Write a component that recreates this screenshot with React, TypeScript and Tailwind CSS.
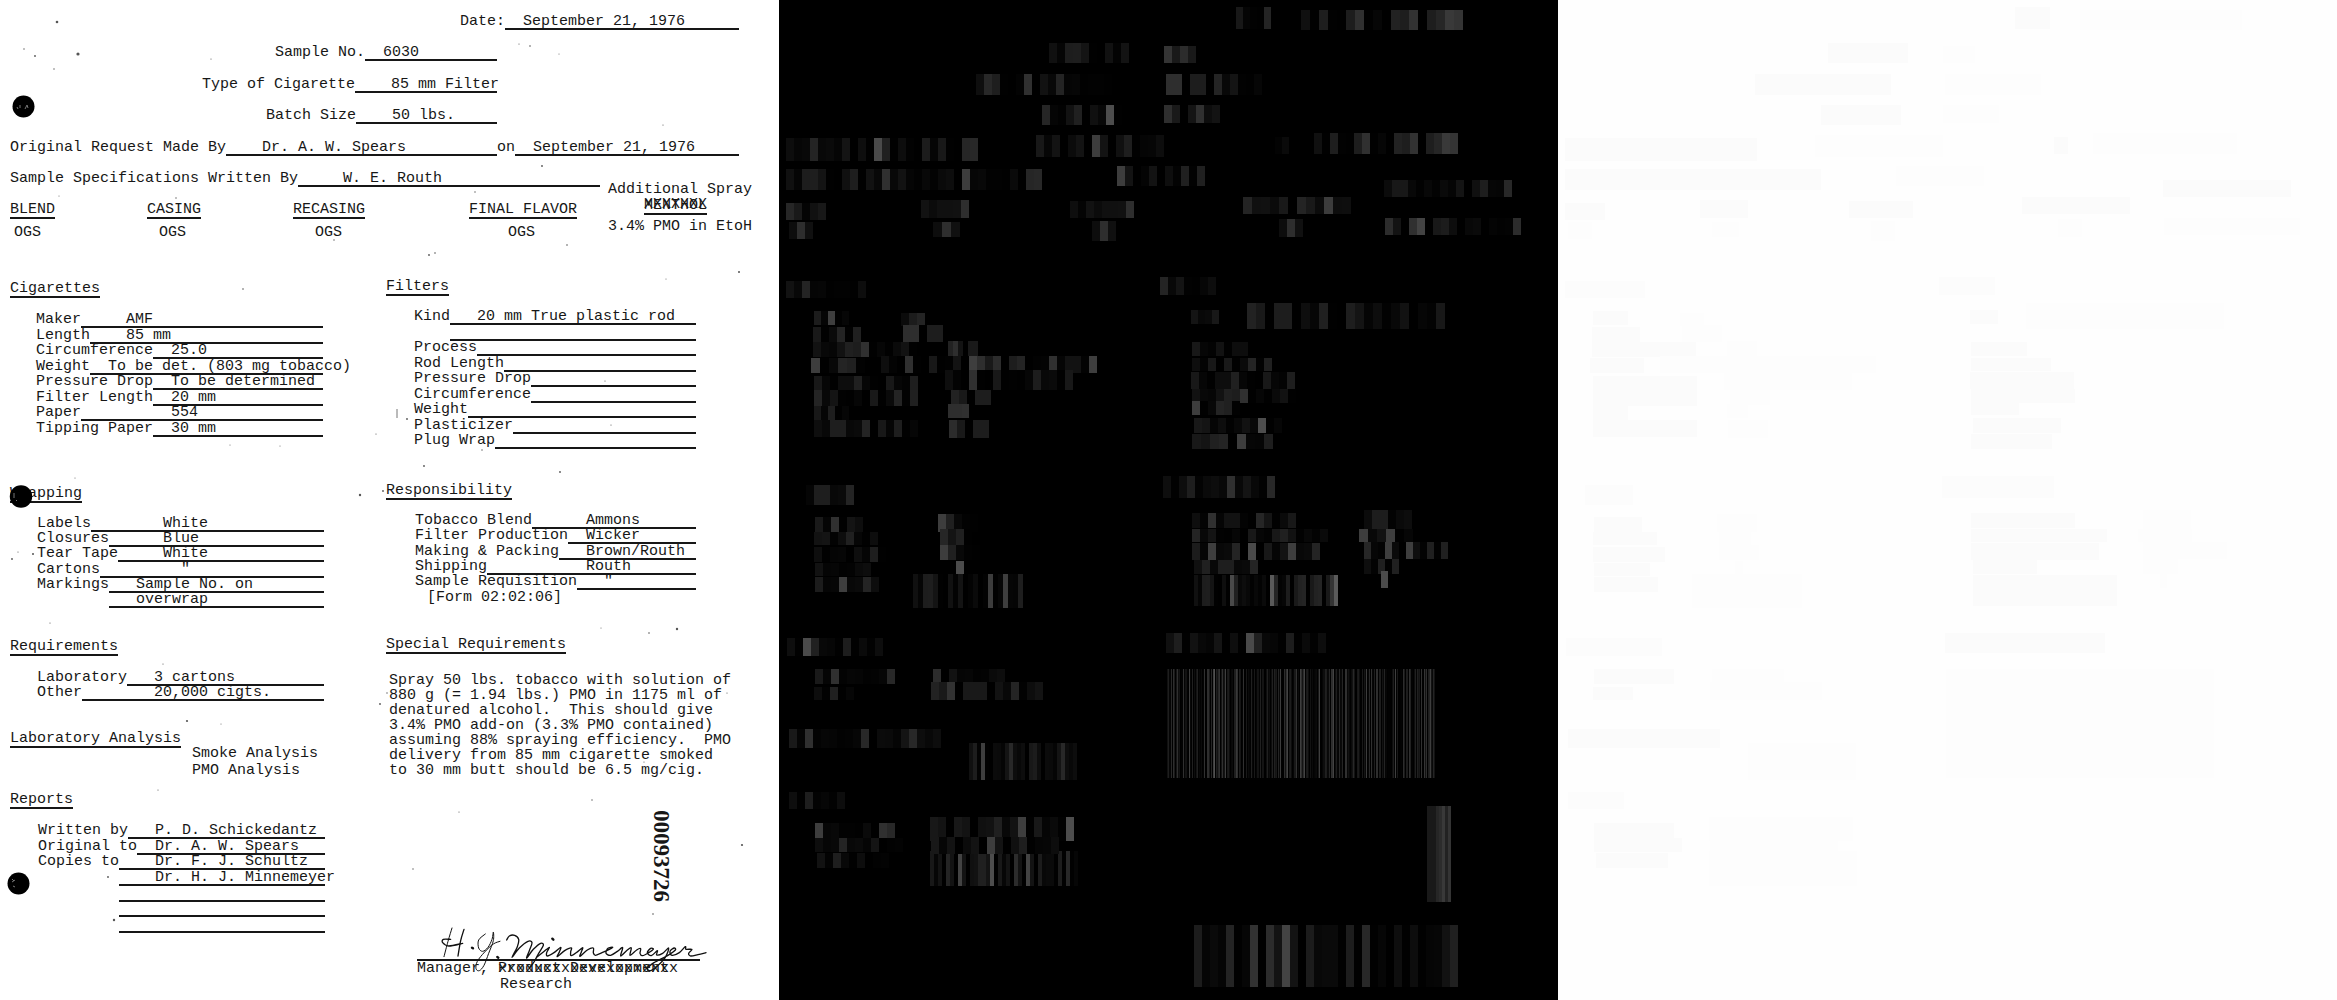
import React from "react";

type FieldData = { label: string; value?: string };

const cigarettes: FieldData[] = [
  { label: "Maker", value: "     AMF" },
  { label: "Length", value: "    85 mm" },
  { label: "Circumference", value: "  25.0" },
  { label: "Weight", value: "  To be det. (803 mg tobacco)" },
  { label: "Pressure Drop", value: "  To be determined" },
  { label: "Filter Length", value: "  20 mm" },
  { label: "Paper", value: "          554" },
  { label: "Tipping Paper", value: "  30 mm" },
];

const wrapping: FieldData[] = [
  { label: "Labels", value: "        White" },
  { label: "Closures", value: "      Blue" },
  { label: "Tear Tape", value: "     White" },
  { label: "Cartons", value: '         "' },
  { label: "Markings", value: "   Sample No. on" },
  { label: "        ", value: "   overwrap" },
];

const requirements: FieldData[] = [
  { label: "Laboratory", value: "   3 cartons" },
  { label: "Other", value: "        20,000 cigts." },
];

const reports: FieldData[] = [
  { label: "Written by", value: "   P. D. Schickedantz" },
  { label: "Original to", value: "  Dr. A. W. Spears" },
  { label: "Copies to", value: "    Dr. F. J. Schultz" },
  { label: "         ", value: "    Dr. H. J. Minnemeyer" },
  { label: "         " },
  { label: "         " },
  { label: "         " },
];

const filters: FieldData[] = [
  { label: "Kind", value: "   20 mm True plastic rod" },
  { label: "    " },
  { label: "Process" },
  { label: "Rod Length" },
  { label: "Pressure Drop" },
  { label: "Circumference" },
  { label: "Weight" },
  { label: "Plasticizer" },
  { label: "Plug Wrap" },
];

const responsibility: FieldData[] = [
  { label: "Tobacco Blend", value: "      Ammons" },
  { label: "Filter Production", value: "  Wicker" },
  { label: "Making & Packing", value: "   Brown/Routh" },
  { label: "Shipping", value: "           Routh" },
  { label: "Sample Requisition", value: '   "' },
];

const specialText = [
  "Spray 50 lbs. tobacco with solution of",
  "880 g (= 1.94 lbs.) PMO in 1175 ml of",
  "denatured alcohol.  This should give",
  "3.4% PMO add-on (3.3% PMO contained)",
  "assuming 88% spraying efficiency.  PMO",
  "delivery from 85 mm cigarette smoked",
  "to 30 mm butt should be 6.5 mg/cig.",
];

function Rule({ children }: { children?: React.ReactNode }) {
  return <span className="h-4 min-w-0 flex-1 border-b-2 border-neutral-900">{children}</span>;
}

function Field({ label, value }: FieldData) {
  return (
    <div className="flex h-[15px] items-end">
      <span className="h-4">{label}</span>
      <Rule>{value}</Rule>
    </div>
  );
}

function Heading({ children }: { children: React.ReactNode }) {
  return (
    <h2 className="flex">
      <span className="h-[17px] border-b-2 border-neutral-900">{children}</span>
    </h2>
  );
}

function Fields({ items, className }: { items: FieldData[]; className: string }) {
  return (
    <div className={`flex flex-col justify-between ${className}`}>
      {items.map((f, i) => (
        <Field key={i} label={f.label} value={f.value} />
      ))}
    </div>
  );
}

function Overtyped({ text, over }: { text: string; over: string }) {
  return (
    <span className="relative">
      <s className="no-underline">{text}</s>
      <span aria-hidden="true" className="absolute left-0 top-0">
        {over}
      </span>
    </span>
  );
}

const specks: [number, number, number][] = [
  [57, 22, 1.3], [24, 49, 0.7], [35, 56, 0.9], [78, 54, 1.6], [54, 69, 0.7], [211, 59, 0.6],
  [519, 44, 0.6], [530, 46, 0.8], [559, 54, 0.5], [663, 125, 0.6], [542, 166, 0.9], [475, 192, 0.7],
  [176, 198, 0.7], [59, 196, 0.5], [334, 240, 0.7], [567, 245, 0.8], [429, 255, 0.9], [435, 253, 0.8],
  [243, 289, 0.8], [739, 272, 1], [666, 279, 0.5], [407, 419, 0.9], [376, 434, 0.6], [230, 445, 0.5],
  [280, 446, 0.5], [424, 466, 0.9], [560, 472, 0.9], [482, 450, 0.7], [605, 381, 0.6], [611, 425, 0.6],
  [360, 495, 1.2], [383, 491, 0.9], [75, 478, 0.5], [12, 559, 0.9], [18, 552, 0.6], [33, 554, 1],
  [50, 623, 0.6], [649, 633, 0.8], [677, 629, 1.2], [601, 628, 0.5], [163, 664, 0.6], [187, 721, 1.1],
  [221, 724, 0.5], [380, 704, 0.9], [387, 693, 0.7], [727, 693, 0.6], [644, 762, 0.6], [158, 790, 0.6],
  [592, 800, 0.7], [459, 812, 0.6], [413, 869, 0.7], [742, 845, 1.1], [108, 877, 0.9], [114, 920, 1.2],
  [653, 914, 0.8],
];

function ScanMarks() {
  return (
    <svg className="pointer-events-none absolute left-0 top-0" width="779" height="1000" viewBox="0 0 779 1000" aria-hidden="true">
      {specks.map(([x, y, r], i) => (
        <circle key={i} cx={x} cy={y} r={r} fill="#555" />
      ))}
      <path d="M397 409v9" stroke="#777" strokeWidth="1" />
      <circle cx="23.500" cy="106.500" r="11" fill="#000" />
      <circle cx="21" cy="496.500" r="11.200" fill="#000" />
      <circle cx="18.500" cy="883.500" r="11" fill="#000" />
      <path d="M17 107l1 2M20 105v3M25 109l2-4 1 3M14 493v5M16 500l1 1M12 882l3-2M13 886l2 1M12 879l2 2" stroke="#777" strokeWidth="1" fill="none" />
    </svg>
  );
}

type Point = [number, number];

/* Smooth pen stroke that passes through every point. */
function stroke(points: Point[]) {
  let d = `M${points[0][0]} ${points[0][1]}`;
  for (let i = 0; i < points.length - 1; i++) {
    const a = points[Math.max(i - 1, 0)];
    const b = points[i];
    const c = points[i + 1];
    const e = points[Math.min(i + 2, points.length - 1)];
    d += `C${b[0] + (c[0] - a[0]) / 6} ${b[1] + (c[1] - a[1]) / 6} ${c[0] - (e[0] - b[0]) / 6} ${c[1] - (e[1] - b[1]) / 6} ${c[0]} ${c[1]}`;
  }
  return d;
}

const thinStrokes: Point[][] = [
  [[126, 36], [114, 76], [102, 122]],
  [[226, 54], [206, 72], [206, 96], [218, 106], [234, 94], [246, 70], [250, 48], [250, 74], [236, 112], [222, 148], [208, 164], [198, 158], [202, 136], [224, 108], [250, 84], [270, 76]],
];

const penStrokes: Point[][] = [
  [[162, 40], [152, 74], [144, 120]],
  [[122, 70], [100, 70], [98, 80], [116, 90], [158, 82]],
  [[290, 72], [298, 60], [314, 58], [326, 70], [322, 92], [306, 124], [328, 96], [354, 76], [366, 80], [358, 104], [350, 126], [370, 100], [392, 82], [400, 88], [386, 112], [372, 138], [358, 156]],
  [[382, 122], [400, 108], [418, 94], [410, 110], [412, 120], [432, 110], [452, 94], [448, 108], [442, 122], [464, 104], [484, 96], [482, 108], [484, 119], [504, 106], [518, 95], [514, 108], [510, 121], [532, 102], [550, 96], [550, 110], [556, 118], [576, 110], [598, 100], [608, 94], [594, 97], [588, 112], [602, 118], [622, 106], [638, 95], [632, 120], [652, 102], [664, 96], [660, 118], [680, 102], [692, 98], [690, 112], [698, 119], [716, 110], [730, 100], [722, 97], [712, 110], [724, 119], [742, 104], [740, 117], [758, 112], [776, 96], [766, 124], [742, 150], [722, 164], [712, 158], [732, 140], [774, 118], [796, 102], [792, 96], [780, 106], [786, 118], [808, 110], [826, 92], [828, 100], [846, 100], [836, 112], [842, 120], [864, 116], [888, 110]],
];

function Signature() {
  return (
    <svg className="pointer-events-none absolute -left-[7px] top-[14px]" width="310" height="85" viewBox="0 0 930 255" role="img" aria-label="Signature">
      <g fill="none" stroke="#111" strokeLinecap="round" strokeLinejoin="round">
        {thinStrokes.map((p, i) => (
          <path key={i} d={stroke(p)} strokeWidth="3" />
        ))}
        {penStrokes.map((p, i) => (
          <path key={i} d={stroke(p)} strokeWidth="4" />
        ))}
        <path d="M186 95l3 2M262 123l3 2M427 68l3 3" strokeWidth="7" />
      </g>
    </svg>
  );
}

function DocumentPanel() {
  return (
    <article className="relative min-w-0 overflow-hidden whitespace-pre bg-white pt-[14px] font-['Liberation_Mono',monospace] text-[15px] leading-4 text-neutral-900">
      <header className="flex h-[173px] w-[739px] flex-col justify-between">
        <div className="flex pl-[460px]">
          <span>Date:</span>
          <Rule>{"  September 21, 1976"}</Rule>
        </div>
        <div className="flex w-[497px] pl-[275px]">
          <span>Sample No.</span>
          <Rule>{"  6030"}</Rule>
        </div>
        <div className="flex w-[497px] pl-[202px]">
          <span>Type of Cigarette</span>
          <Rule>{"    85 mm Filter"}</Rule>
        </div>
        <div className="flex w-[497px] pl-[266px]">
          <span>Batch Size</span>
          <Rule>{"    50 lbs."}</Rule>
        </div>
        <div className="flex pl-[10px]">
          <div className="flex w-[487px]">
            <span>Original Request Made By</span>
            <Rule>{"    Dr. A. W. Spears"}</Rule>
          </div>
          <span>on</span>
          <Rule>{"  September 21, 1976"}</Rule>
        </div>
        <div className="flex w-[600px] pl-[10px]">
          <span>Sample Specifications Written By</span>
          <Rule>{"     W. E. Routh"}</Rule>
        </div>
      </header>

      <table className="-mt-[5px] ml-[10px] w-[757px] table-fixed text-left">
        <thead>
          <tr className="h-[37px] align-bottom">
            <th className="w-[137px] p-0 font-normal"><Heading>BLEND</Heading></th>
            <th className="w-[146px] p-0 font-normal"><Heading>CASING</Heading></th>
            <th className="w-[176px] p-0 font-normal"><Heading>RECASING</Heading></th>
            <th className="w-[139px] p-0 font-normal"><Heading>FINAL FLAVOR</Heading></th>
            <th className="p-0 pb-1 font-normal">
              <div className="h-4">Additional Spray</div>
              <div className="flex pl-9"><Heading><Overtyped text="MENTHOL" over="XXXXXXX" /></Heading></div>
            </th>
          </tr>
        </thead>
        <tbody>
          <tr className="h-[22px] align-bottom">
            <td className="p-0 pl-1">OGS</td>
            <td className="p-0 pl-3">OGS</td>
            <td className="p-0 pl-[22px]">OGS</td>
            <td className="p-0 pl-[39px]">OGS</td>
            <td className="p-0 align-top">3.4% PMO in EtoH</td>
          </tr>
        </tbody>
      </table>

      <div className="flex">
        <div className="w-[376px] pl-[10px] pt-10">
          <Heading>Cigarettes</Heading>
          <Fields items={cigarettes} className="ml-[26px] mt-[15px] h-[124px] w-[287px]" />
          <div className="mt-[49px]"><Heading>Wrapping</Heading></div>
          <Fields items={wrapping} className="ml-[27px] mt-[14px] h-[91px] w-[287px]" />
          <div className="mt-[31px]"><Heading>Requirements</Heading></div>
          <Fields items={requirements} className="ml-[27px] mt-[15px] h-[30px] w-[287px]" />
          <div className="mt-[30px]"><Heading>Laboratory Analysis</Heading></div>
          <div className="-mt-[3px] pl-[182px] leading-[17px]">
            <p>Smoke Analysis</p>
            <p>PMO Analysis</p>
          </div>
          <div className="mt-[13px]"><Heading>Reports</Heading></div>
          <Fields items={reports} className="ml-[28px] mt-[15px] h-[109px] w-[287px]" />
        </div>

        <div className="w-[380px] pl-[10px] pt-[38px]">
          <Heading>Filters</Heading>
          <Fields items={filters} className="ml-[28px] mt-[14px] h-[139px] w-[282px]" />
          <div className="mt-[34px]"><Heading>Responsibility</Heading></div>
          <Fields items={responsibility} className="ml-[29px] mt-[14px] h-[76px] w-[281px]" />
          <p className="ml-[41px]">[Form 02:02:06]</p>
          <div className="mt-[31px]"><Heading>Special Requirements</Heading></div>
          <p className="ml-[3px] mt-[19px] leading-[15px]">{specialText.join("\n")}</p>
          <div className="ml-[264px] mt-8 h-[92px] w-[23px] font-['Liberation_Serif',serif] text-[23px] font-bold leading-[23px] [writing-mode:vertical-rl]">
            00093726
          </div>
          <div className="relative ml-[31px] w-[283px]">
            <div className="h-[59px] border-b-2 border-neutral-900" />
            <Signature />
            <p className="flex">Manager, <Overtyped text="Product Development " over="xxxxxxxxxxxxxxxxxxxx" /></p>
            <p className="pl-[83px]">Research</p>
          </div>
        </div>
      </div>
      <ScanMarks />
    </article>
  );
}

/* Text regions: x, y, character advance, height, kind, text. */
type Kind = "label" | "heading" | "value";
type Region = [number, number, number, number, Kind, string];

const regions: Region[] = [
  [457, 7, 7, 22, "label", "Date:"],
  [522, 10, 9, 20, "value", "September 21, 1976"],
  [270, 43, 8, 20, "label", "Sample No."],
  [385, 46, 8, 17, "value", "6030"],
  [197, 74, 8, 21, "label", "Type of Cigarette"],
  [387, 74, 8, 21, "value", "85 mm Filter"],
  [263, 105, 8, 20, "label", "Batch Size"],
  [385, 105, 8, 18, "value", "50 lbs."],
  [7, 138, 8, 23, "label", "Original Request Made By"],
  [257, 135, 8, 22, "value", "Dr. A. W. Spears"],
  [496, 137, 7, 17, "label", "on"],
  [535, 133, 8, 21, "value", "September 21, 1976"],
  [7, 169, 8, 21, "label", "Sample Specifications Written By"],
  [338, 166, 8, 20, "value", "W. E. Routh"],
  [605, 180, 8, 17, "label", "Additional Spray"],
  [7, 203, 8, 17, "label", "BLEND"],
  [142, 200, 8, 18, "label", "CASING"],
  [291, 201, 8, 17, "label", "RECASING"],
  [464, 197, 9, 17, "label", "FINAL FLAVOR"],
  [10, 222, 8, 17, "value", "OGS"],
  [154, 222, 9, 15, "value", "OGS"],
  [313, 221, 8, 20, "value", "OGS"],
  [500, 219, 8, 18, "value", "OGS"],
  [606, 218, 8, 17, "value", "3. 4% PMO in EtoH"],
  [7, 281, 8, 17, "heading", "Cigarettes"],
  [381, 277, 8, 18, "heading", "Filters"],
  [122, 313, 8, 13, "value", "AMF"],
  [35, 311, 7, 14, "label", "Maker"],
  [124, 325, 8, 17, "value", "85 mm"],
  [34, 327, 8, 15, "label", "Length"],
  [169, 341, 5, 16, "value", "25. 00"],
  [34, 342, 8, 15, "label", "Circumference"],
  [32, 358, 9, 15, "label", "Weight"],
  [102, 356, 8, 17, "value", "To be det. (803 mg tobacco)"],
  [166, 370, 8, 20, "value", "To be determined"],
  [35, 376, 8, 14, "label", "Pressure Drop"],
  [35, 390, 8, 16, "label", "Filter Length"],
  [172, 390, 8, 15, "value", "20 mm"],
  [35, 406, 7, 14, "label", "Paper"],
  [169, 404, 7, 14, "value", "554"],
  [35, 420, 8, 17, "label", "Tipping Paper"],
  [170, 420, 8, 18, "value", "30 mm"],
  [412, 310, 7, 14, "label", "Kind"],
  [468, 303, 9, 26, "value", "20 mm True plastic rod"],
  [413, 342, 8, 14, "label", "Process"],
  [413, 358, 8, 13, "label", "Rod Length"],
  [412, 372, 8, 17, "label", "Pressure Drop"],
  [413, 389, 8, 14, "label", "Circumference"],
  [413, 401, 8, 14, "label", "Weight"],
  [415, 418, 8, 15, "label", "Plasticizer"],
  [413, 434, 9, 15, "label", "Plug Wrap"],
  [27, 485, 8, 20, "heading", "apping"],
  [384, 476, 8, 22, "heading", "Responsibility"],
  [36, 517, 8, 15, "label", "Labels"],
  [159, 514, 8, 18, "value", "White"],
  [35, 532, 8, 13, "label", "Closures"],
  [161, 529, 8, 16, "value", "Blue"],
  [35, 547, 8, 15, "label", "Tear Tape"],
  [161, 545, 8, 15, "value", "White"],
  [36, 563, 8, 13, "label", "Cartons"],
  [177, 561, 8, 13, "value", '"'],
  [36, 577, 8, 15, "label", "Markings"],
  [134, 574, 5, 34, "value", "Sample No. on overwrap"],
  [413, 513, 8, 15, "label", "Tobacco Blend"],
  [585, 510, 8, 19, "value", "Ammons"],
  [413, 529, 8, 13, "label", "Filter Production"],
  [580, 529, 9, 13, "value", "Wicker"],
  [413, 543, 8, 17, "label", "Making & Packing"],
  [585, 542, 7, 17, "value", "Brown /Routh"],
  [415, 560, 8, 14, "label", "Shipping"],
  [585, 559, 7, 15, "value", "Routh"],
  [602, 571, 7, 17, "value", '"'],
  [415, 575, 4, 31, "label", "Sample Requisition [Form 02: 02: 06]"],
  [8, 638, 8, 18, "heading", "Requirements"],
  [387, 633, 8, 20, "label", "Special Requirements"],
  [36, 669, 8, 15, "label", "Laboratory"],
  [154, 669, 8, 14, "value", "3 cartons"],
  [35, 687, 8, 13, "label", "Other"],
  [152, 682, 8, 18, "value", "20, 000 cigts."],
  [388, 669, 1, 109, "value", specialText.join("  ")],
  [10, 729, 8, 19, "label", "Laboratory Analysis"],
  [190, 743, 4, 37, "value", "Smoke Analysis PMO Analysis"],
  [10, 792, 8, 17, "heading", "Reports"],
  [36, 823, 8, 15, "label", "Written by"],
  [36, 838, 8, 14, "label", "Original to"],
  [38, 853, 8, 15, "label", "Copies to"],
  [151, 851, 4, 35, "value", "Dr. F. J. Schulz Dr. H. J. Minnemeyer"],
  [151, 817, 8, 24, "value", "P. D. Schickedantz"],
  [152, 837, 8, 17, "value", "Dr. A. W. Spears"],
  [648, 806, 3, 96, "value", "00093726"],
  [415, 925, 8, 62, "value", "Manager, H.J. Minnemeyer Research"],
];

/* Grey level of each character, roughly its rank by frequency. */
const greys: Record<string, number> = {
  " ": 0, e: 1, t: 2, o: 3, a: 5, r: 6, i: 8, n: 10, s: 13, c: 18, l: 20, d: 24, m: 29, p: 30, u: 32, h: 32,
  f: 48, g: 36, y: 40, b: 48, w: 62, v: 60, k: 62, j: 64, q: 74, z: 77, x: 70,
  E: 4, A: 11, O: 13, R: 14, S: 16, I: 16, N: 17, T: 14, C: 18, D: 24, L: 25, P: 24, M: 28, F: 36, B: 38, H: 44, G: 46,
  V: 60, W: 61, J: 67, ".": 19, ",": 50, ":": 36, "0": 25, "1": 30, "2": 34, "3": 44, "4": 48, "5": 46, "6": 52,
  "7": 57, "8": 46, "9": 38, "%": 67, "(": 62, ")": 62, "/": 62, "&": 74, '"': 75, "[": 90, "]": 90, "-": 50, "=": 80,
};

function CharacterMap() {
  return (
    <svg className="block h-auto w-full" viewBox="0 0 779 1000" shapeRendering="crispEdges" role="img" aria-label="Character map">
      {regions.map(([x, y, step, h, , text], i) =>
        Array.from(text).map((ch, j) => {
          const g = greys[ch] ?? 20;
          return <rect key={`${i}-${j}`} x={x + j * step} y={y} width={step} height={h} fill={`rgb(${g},${g},${g})`} />;
        }),
      )}
    </svg>
  );
}

const regionFill: Record<Kind, string> = { label: "#fbfbfb", heading: "#fcfcfc", value: "#fdfdfd" };

function RegionMap() {
  return (
    <svg className="block h-auto w-full" viewBox="0 0 779 1000" shapeRendering="crispEdges" role="img" aria-label="Region map">
      {regions
        .filter(([, y]) => y < 925 && y !== 806)
        .map(([x, y, step, h, kind, text], i) => (
          <rect key={i} x={x} y={y} width={step * text.length} height={h} fill={regionFill[kind]} />
        ))}
    </svg>
  );
}

export default function App() {
  return (
    <main className="grid min-h-screen grid-cols-3 bg-white">
      <DocumentPanel />
      <section className="min-w-0 bg-black">
        <CharacterMap />
      </section>
      <section className="min-w-0 bg-[#fefefe]">
        <RegionMap />
      </section>
    </main>
  );
}
